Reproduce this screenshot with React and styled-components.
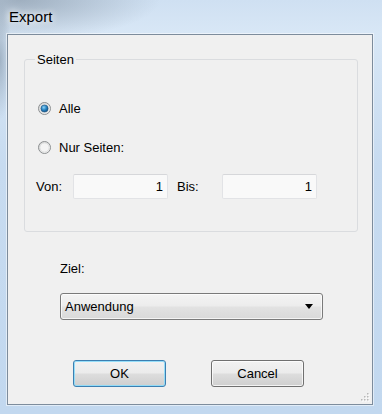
import styled, { createGlobalStyle } from "styled-components";

const GlobalStyle = createGlobalStyle`
    html, body {
        margin: 0;
        padding: 0;
        background: #c4d9ef;
    }
    * {
        box-sizing: border-box;
    }
`

const Frame = styled.div`
    width: 382px;
    height: 414px;
    display: flex;
    flex-direction: column;
    padding: 0 9px 9px 7px;
    font-family: "Liberation Sans", Arial, sans-serif;
    background:
        radial-gradient(ellipse 140px 40px at 20px 0px, rgba(120, 135, 150, 0.55), rgba(120, 135, 150, 0) 100%),
        radial-gradient(ellipse 12px 60px at 0px 60px, rgba(110, 130, 150, 0.5), rgba(110, 130, 150, 0) 100%),
        linear-gradient(to bottom, #cfe0f2 0%, #d8e7f6 8%, #c7dbf0 40%, #c2d8ef 100%);
`

const TitleBar = styled.div`
    height: 34px;
    display: flex;
    align-items: center;
    padding: 0 0 2px 2px;
    font-size: 15px;
    color: #000;
    text-shadow: 0 0 6px rgba(255, 255, 255, 0.95), 0 0 10px rgba(255, 255, 255, 0.8);
`

const Client = styled.div`
    flex: 1;
    display: flex;
    flex-direction: column;
    position: relative;
    background: #f0f0f0;
    border: 1px solid #7d8c9c;
    box-shadow: 0 0 0 1px rgba(255, 255, 255, 0.5);
    font-size: 13px;
    color: #000;
`

const GroupBox = styled.fieldset`
    margin: 17px 0 0 16px;
    width: 334px;
    padding: 0 11px 32px 11px;
    border: 1px solid #dadcdf;
    border-radius: 3px;
    display: flex;
    flex-direction: column;
`

const Legend = styled.legend`
    padding: 0 2px;
    margin-left: -1px;
    line-height: 15px;
`

const RadioRow = styled.label`
    display: flex;
    align-items: center;
    gap: 8px;
    height: 20px;
    margin-top: ${p => p.$top}px;
    padding-left: 2px;
`

const FieldRow = styled.div`
    display: flex;
    align-items: center;
    margin-top: 17px;
    height: 25px;
`

const FieldLabel = styled.span`
    width: ${p => p.$width}px;
    flex-shrink: 0;
`

const NumberBox = styled.div`
    width: 95px;
    height: 25px;
    flex-shrink: 0;
    margin-right: ${p => p.$gap || 0}px;
    padding-right: 4px;
    display: flex;
    align-items: center;
    justify-content: flex-end;
    background: #f9f9f9;
    border: 1px solid #e2e3e6;
    border-top-color: #d6d7da;
    border-radius: 2px;
`

const ZielLabel = styled.div`
    margin: 29px 0 0 52px;
    line-height: 15px;
`

const Dropdown = styled.div`
    margin: 17px 0 0 52px;
    width: 263px;
    height: 27px;
    display: flex;
    align-items: center;
    justify-content: space-between;
    padding: 0 9px 0 4px;
    border: 1px solid #7a7a7a;
    border-radius: 3px;
    background: linear-gradient(to bottom, #f4f4f4 0%, #ececec 48%, #e2e2e2 52%, #d9d9d9 100%);
    box-shadow: inset 0 0 0 1px rgba(255, 255, 255, 0.7);
`

const ButtonRow = styled.div`
    display: flex;
    gap: 45px;
    margin: 40px 0 0 65px;
`

const Button = styled.div`
    width: 93px;
    height: 27px;
    display: flex;
    align-items: center;
    justify-content: center;
    border-radius: 3px;
    border: 1px solid ${p => (p.$default ? "#3c7fb1" : "#707070")};
    background: linear-gradient(to bottom, #f2f2f2 0%, #ebebeb 48%, #dddddd 52%, #cfcfcf 100%);
    box-shadow: inset 0 0 0 1px ${p => (p.$default ? "rgba(140, 220, 250, 0.9)" : "rgba(255, 255, 255, 0.75)")};
`

const Grip = styled.svg`
    position: absolute;
    right: 2px;
    bottom: 2px;
`

const Radio = ({ checked }) => (
    <svg width="13" height="13" viewBox="0 0 13 13">
        <defs>
            <linearGradient id={checked ? "rbg1" : "rbg0"} x1="0" y1="0" x2="1" y2="1">
                <stop offset="0" stopColor="#cfcfcf" />
                <stop offset="1" stopColor="#fbfbfb" />
            </linearGradient>
            <radialGradient id="rdot" cx="0.4" cy="0.35" r="0.7">
                <stop offset="0" stopColor="#8fd3f7" />
                <stop offset="0.5" stopColor="#2a86c4" />
                <stop offset="1" stopColor="#0c4f86" />
            </radialGradient>
        </defs>
        <circle cx="6.5" cy="6.5" r="6" fill={`url(#${checked ? "rbg1" : "rbg0"})`} stroke="#8c8f91" strokeWidth="1" />
        <circle cx="6.5" cy="6.5" r="4.6" fill="#f4f4f4" stroke="#d9dadb" strokeWidth="0.8" />
        {checked && <circle cx="6.5" cy="6.5" r="3.6" fill="url(#rdot)" stroke="#1d4f78" strokeWidth="0.6" />}
    </svg>
)

const App = () => {
    const dots = [[8, 2], [5, 5], [8, 5], [2, 8], [5, 8], [8, 8]]

    return (
        <>
            <GlobalStyle />
            <Frame>
                <TitleBar>Export</TitleBar>
                <Client>
                    <GroupBox>
                        <Legend>Seiten</Legend>
                        <RadioRow $top={31}>
                            <Radio checked />
                            Alle
                        </RadioRow>
                        <RadioRow $top={19}>
                            <Radio />
                            Nur Seiten:
                        </RadioRow>
                        <FieldRow>
                            <FieldLabel $width={37}>Von:</FieldLabel>
                            <NumberBox $gap={9}>1</NumberBox>
                            <FieldLabel $width={45}>Bis:</FieldLabel>
                            <NumberBox>1</NumberBox>
                        </FieldRow>
                    </GroupBox>
                    <ZielLabel>Ziel:</ZielLabel>
                    <Dropdown>
                        <span>Anwendung</span>
                        <svg width="8" height="5" viewBox="0 0 8 5">
                            <path d="M0 0 H8 L4 5 Z" fill="#000" />
                        </svg>
                    </Dropdown>
                    <ButtonRow>
                        <Button $default>OK</Button>
                        <Button>Cancel</Button>
                    </ButtonRow>
                    <Grip width="11" height="11" viewBox="0 0 11 11">
                        {dots.map(([x, y], i) => (
                            <g key={i}>
                                <rect x={x + 1} y={y + 1} width="1.5" height="1.5" fill="#ffffff" />
                                <rect x={x} y={y} width="1.5" height="1.5" fill="#b8b8b8" />
                            </g>
                        ))}
                    </Grip>
                </Client>
            </Frame>
        </>
    )
}

export default App;
